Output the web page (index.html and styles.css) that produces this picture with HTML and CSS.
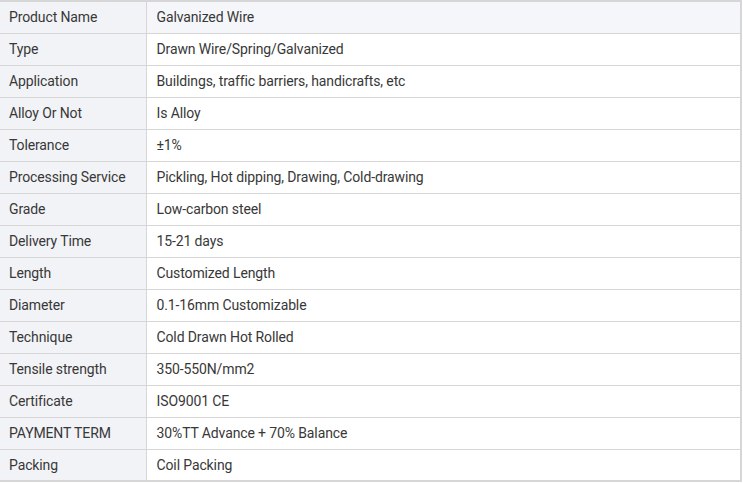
FILE: index.html
```html
<!DOCTYPE html>
<html>
<head>
<meta charset="utf-8">
<link rel="stylesheet" href="styles.css">
</head>
<body>
<table class="spec">
<tbody>
<tr class="head"><td class="k">Product Name</td><td class="v">Galvanized Wire</td></tr>
<tr><td class="k">Type</td><td class="v">Drawn Wire/Spring/Galvanized</td></tr>
<tr><td class="k">Application</td><td class="v">Buildings, traffic barriers, handicrafts, etc</td></tr>
<tr><td class="k">Alloy Or Not</td><td class="v">Is Alloy</td></tr>
<tr><td class="k">Tolerance</td><td class="v">±1%</td></tr>
<tr><td class="k">Processing Service</td><td class="v">Pickling, Hot dipping, Drawing, Cold-drawing</td></tr>
<tr><td class="k">Grade</td><td class="v">Low-carbon steel</td></tr>
<tr><td class="k">Delivery Time</td><td class="v">15-21 days</td></tr>
<tr><td class="k">Length</td><td class="v">Customized Length</td></tr>
<tr><td class="k">Diameter</td><td class="v">0.1-16mm Customizable</td></tr>
<tr><td class="k">Technique</td><td class="v">Cold Drawn Hot Rolled</td></tr>
<tr><td class="k">Tensile strength</td><td class="v">350-550N/mm2</td></tr>
<tr><td class="k">Certificate</td><td class="v">ISO9001 CE</td></tr>
<tr><td class="k">PAYMENT TERM</td><td class="v">30%TT Advance + 70% Balance</td></tr>
<tr><td class="k">Packing</td><td class="v">Coil Packing</td></tr>
</tbody>
</table>
</body>
</html>
```
FILE: styles.css
```css
html, body {
  margin: 0;
  padding: 0;
  background: #ffffff;
}
.spec {
  border-collapse: collapse;
  width: 742px;
  font-family: Roboto, "Liberation Sans", Arial, sans-serif;
  font-size: 14px;
  letter-spacing: -0.12px;
  color: #383838;
  border-top: 2px solid #d6d6d6;
  border-right: 2px solid #d6d6d6;
  border-bottom: 2px solid #d6d6d6;
}
.spec td {
  height: 32px;
  padding: 0 0 0 9px;
  border-bottom: 1px solid #d6d6d6;
  box-sizing: border-box;
  vertical-align: middle;
}
.spec .k {
  width: 146px;
  background: #f2f3f7;
  border-right: 1px solid #d6d6d6;
}
.spec .v {
  padding-left: 10px;
  background: #ffffff;
}
.spec tr.head .v {
  background: #f5f6f9;
}
.spec tr.head .k {
  background: #f2f3f7;
}
```
